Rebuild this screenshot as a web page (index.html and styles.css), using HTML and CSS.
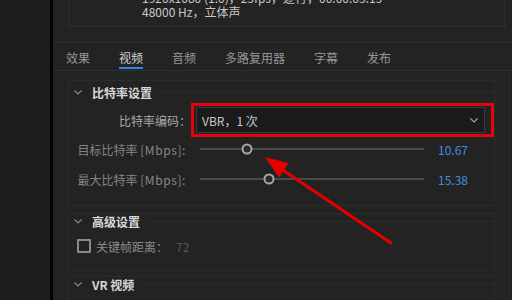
FILE: index.html
```html
<!DOCTYPE html>
<html lang="zh">
<head>
<meta charset="utf-8">
<link rel="stylesheet" href="styles.css">
</head>
<body>
<div class="app">
  <div class="side"></div>
  <div class="main">
    <div class="info">
      <div class="info-line">1920x1080 (1.0)，25fps，逐行，00:00:05:13</div>
      <div class="info-line">48000 Hz，立体声</div>
    </div>
    <nav class="tabs">
      <span class="tab">效果</span>
      <span class="tab active">视频</span>
      <span class="tab">音频</span>
      <span class="tab">多路复用器</span>
      <span class="tab">字幕</span>
      <span class="tab">发布</span>
    </nav>
    <div class="content">
      <section class="sec s1">
        <div class="sec-head">
          <svg class="chev" viewBox="0 0 8 5"><polyline points="0.5,0.5 4,4 7.5,0.5"/></svg>
          <span class="sec-title">比特率设置</span>
          <span class="rule"></span>
        </div>
        <div class="row row-dd">
          <span class="lbl">比特率编码：</span>
          <div class="hl">
            <div class="dd">
              <span class="dd-text">VBR，1 次</span>
              <svg class="dd-chev" viewBox="0 0 8 5"><polyline points="0.5,0.5 4,4 7.5,0.5"/></svg>
            </div>
          </div>
        </div>
        <div class="row row-sl">
          <span class="lbl dim">目标比特率 <span class="unit">[Mbps]:</span></span>
          <div class="slider">
            <div class="track"><span class="thumb" style="left:21%"></span></div>
            <span class="val">10.67</span>
          </div>
        </div>
        <div class="row row-sl second">
          <span class="lbl dim">最大比特率 <span class="unit">[Mbps]:</span></span>
          <div class="slider">
            <div class="track"><span class="thumb" style="left:31%"></span></div>
            <span class="val">15.38</span>
          </div>
        </div>
      </section>
      <section class="sec s2">
        <div class="sec-head">
          <svg class="chev" viewBox="0 0 8 5"><polyline points="0.5,0.5 4,4 7.5,0.5"/></svg>
          <span class="sec-title">高级设置</span>
          <span class="rule"></span>
        </div>
        <div class="row row-cb">
          <span class="cb"></span>
          <span class="cb-label">关键帧距离：</span>
          <span class="cb-val">72</span>
        </div>
      </section>
      <section class="sec s3">
        <div class="sec-head">
          <svg class="chev" viewBox="0 0 8 5"><polyline points="0.5,0.5 4,4 7.5,0.5"/></svg>
          <span class="sec-title">VR 视频</span>
          <span class="rule"></span>
        </div>
      </section>
    </div>
  </div>
  <svg class="arrow" viewBox="0 0 512 300" width="512" height="300">
    <line x1="391" y1="243" x2="282" y2="169.5" stroke="#e50000" stroke-width="3" stroke-linecap="round"/>
    <polygon points="265,157 288.5,163 279,177.5" fill="#e50000"/>
  </svg>
</div>
</body>
</html>
```

FILE: styles.css
```css
html, body {
  margin: 0;
  padding: 0;
}
body {
  background: #1e1e1e;
  font-family: "Noto Sans CJK SC", "Noto Sans", sans-serif;
  font-size: 12px;
  color: #a0a0a0;
}
.app {
  position: relative;
  display: flex;
  width: 512px;
  height: 300px;
  overflow: hidden;
}
.side {
  width: 50px;
  flex: none;
  background: #1e1e1e;
  border-right: 3px solid #000;
}
.main {
  flex: 1;
  min-width: 0;
  background: #232323;
  display: flex;
  flex-direction: column;
}
.main > * {
  flex: none;
}
.info {
  margin: -12px 7px 0 15px;
  height: 35px;
  padding: 3px 0 0 73px;
  border: 1px solid #2f2f2f;
  border-top: 0;
  line-height: 14px;
  color: #c8c8c8;
  white-space: nowrap;
  overflow: hidden;
}
.tabs {
  margin-top: 15px;
  border-top: 1px solid #2f2f2f;
  border-bottom: 1px solid #2f2f2f;
  padding: 7px 0 1px 13px;
  display: flex;
  gap: 29px;
}
.tab {
  line-height: 16px;
  padding-bottom: 1px;
  border-bottom: 2px solid transparent;
  color: #979797;
}
.tab.active {
  color: #d2d2d2;
  border-bottom-color: #2d87e6;
}
.content {
  padding: 9px 14px 0 15px;
  margin-right: 2px;
  border-right: 1px solid #2a2a2a;
}
.sec {
  border: 1px solid #2c2c2c;
}
.sec-head {
  display: flex;
  align-items: center;
  height: 14px;
  padding-left: 5px;
}
.s1 .sec-head {
  padding-top: 4px;
}
.chev {
  width: 8px;
  height: 5px;
  margin-right: 10px;
  fill: none;
  stroke: #8a8a8a;
  stroke-width: 1.2;
}
.sec-title {
  font-weight: bold;
  color: #d8d8d8;
  white-space: nowrap;
}
.rule {
  flex: 1;
  height: 1px;
  background: #2c2c2c;
  margin-left: 8px;
}
.row {
  display: flex;
  align-items: center;
}
.lbl {
  width: 122px;
  flex: none;
  text-align: right;
  color: #a9a9a9;
  white-space: nowrap;
}
.lbl.dim {
  color: #868686;
  padding-right: 5px;
  width: 117px;
}
.unit {
  letter-spacing: 0.6px;
}
.row-dd {
  margin-top: 4px;
}
.hl {
  flex: 1;
  border: 3px solid #e8000b;
  padding: 1px 6px 1px 2px;
}
.dd {
  display: flex;
  align-items: center;
  height: 24px;
  border: 1px solid #383838;
  background: #1b1b1b;
  padding: 0 6px 0 5px;
  color: #c8c8c8;
}
.dd-text {
  flex: 1;
}
.dd-chev {
  width: 8px;
  height: 5px;
  fill: none;
  stroke: #a0a0a0;
  stroke-width: 1.2;
}
.row-sl {
  height: 24px;
}
.row-sl.second {
  margin-top: 6px;
}
.s1 {
  padding-bottom: 14px;
}
.slider {
  flex: 1;
  display: flex;
  align-items: center;
}
.track {
  flex: 1;
  margin-left: 9px;
  height: 2px;
  background: #4a4a4a;
  position: relative;
}
.thumb {
  position: absolute;
  top: 50%;
  width: 7px;
  height: 7px;
  border: 2px solid #a8a8a8;
  border-radius: 50%;
  background: #2a2a2a;
  transform: translate(-50%, -50%);
}
.val {
  width: 56px;
  padding-left: 14px;
  color: #3f8fdc;
}
.s2 {
  margin-top: 7px;
  padding-bottom: 19px;
}
.row-cb {
  margin-top: 11px;
  padding-left: 8px;
  height: 14px;
}
.cb {
  width: 10px;
  height: 10px;
  border: 2px solid #8b8b8b;
  border-radius: 1px;
}
.cb-label {
  margin-left: 5px;
  color: #8a8a8a;
}
.cb-val {
  margin-left: 8px;
  color: #555;
}
.s2 {
  padding-bottom: 17px;
}
.s3 {
  margin-top: 5px;
  height: 40px;
}
.arrow {
  position: absolute;
  left: 0;
  top: 0;
  pointer-events: none;
}
```
